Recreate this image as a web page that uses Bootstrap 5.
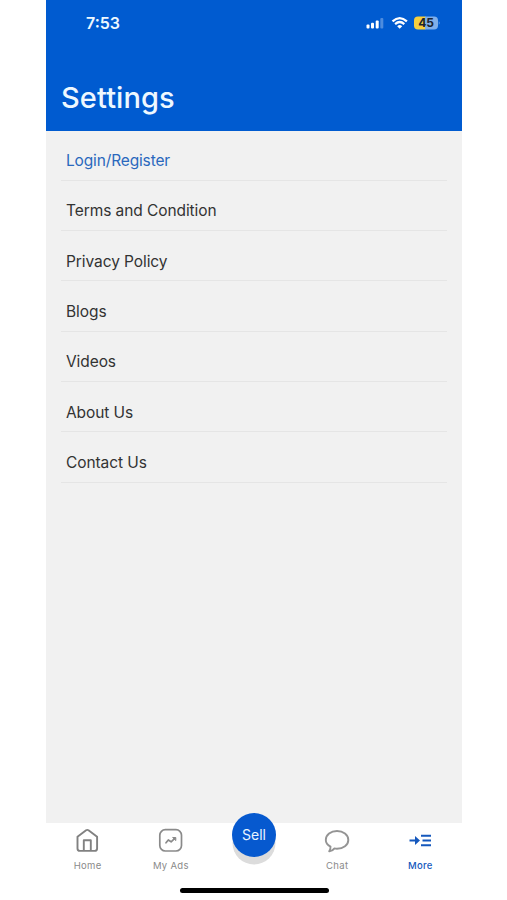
<!DOCTYPE html>
<html lang="en">
<head>
<meta charset="utf-8">
<meta name="viewport" content="width=device-width, initial-scale=1">
<title>Settings</title>
<link href="https://cdn.jsdelivr.net/npm/bootstrap@5.3.0/dist/css/bootstrap.min.css" rel="stylesheet">
<style>
body { font-family: Inter, "Liberation Sans", sans-serif; background: #fff; }
.phone { width: 416px; height: 900px; margin-left: 46px; overflow: hidden; }
.top-bar { background: #005bd0; height: 130.5px; color: #eef8ff; flex: none; }
.status { height: 46px; padding: 0 22px 0 40px; }
.clock { font-size: 16px; font-weight: 600; line-height: 46px; letter-spacing: 0; }
.page-title { font-size: 29px; font-weight: 500; line-height: 36px; margin: 34px 0 0 15px; letter-spacing: .1px; }
.panel { background: #f1f1f1; padding: 0 15px; }
.menu-row { height: 50.3px; padding: 20.7px 5px 0; border-bottom: 1.5px solid #e5e5e5; font-size: 15.5px; line-height: 20px; letter-spacing: -.08px; color: #333; }
.menu-row.accent { color: #2a68bd; padding-top: 20px; letter-spacing: -.15px; }
.tab-bar { height: 77.5px; flex: none; }
.tab { flex: 1 1 0; color: #8a8a8a; font-size: 9.5px; line-height: 12px; padding-top: 5px; letter-spacing: .3px; }
.tab svg { display: block; margin-bottom: 7px; }
.tab.current { color: #1558bd; font-weight: 500; }
.tab-mid { flex: 1 1 0; }
.sell { width: 44px; height: 44px; margin-top: -9.5px; padding-bottom: 2px; background: #0659cf; color: #e8f4ff; font-size: 14px; box-shadow: 0 8px 0 -.5px #dcdcdc; }
.home-pill { width: 149px; height: 5px; background: #000; margin: 0 auto 7px; }
</style>
<script src="https://cdn.jsdelivr.net/npm/bootstrap@5.3.0/dist/js/bootstrap.bundle.min.js"></script>
</head>
<body>
<div class="phone d-flex flex-column">
  <header class="top-bar">
    <div class="status d-flex justify-content-between align-items-center">
      <span class="clock">7:53</span>
      <svg width="75" height="16" viewBox="0 0 75 16" aria-hidden="true">
        <g fill="#fff">
          <rect x="1.500" y="9.500" width="3" height="4" rx="1"/>
          <rect x="6" y="7.800" width="3" height="5.700" rx="1"/>
          <rect x="10.700" y="5.500" width="3" height="8" rx="1"/>
          <rect x="15.300" y="3" width="3" height="10.500" rx="1" opacity=".3"/>
        </g>
        <g fill="none" stroke="#fff" stroke-width="2.200">
          <path d="M27.500 6.400Q34.700 -.3 41.900 6.400"/>
          <path d="M30.100 9.100Q34.700 4.900 39.300 9.100"/>
        </g>
        <path d="M32.200 11.200Q34.700 9 37.200 11.200L34.700 13.700Z" fill="#fff"/>
        <path d="M53 1.500H60.500V14.500H53Q49 14.500 49 10.500V5.500Q49 1.500 53 1.500Z" fill="#f7cf3c"/>
        <path d="M60 1.500H69Q73 1.500 73 5.500V10.500Q73 14.500 69 14.500H60Z" fill="#7fafea"/>
        <path d="M73.800 6.300Q75.300 8 73.800 9.700Z" fill="#7fafea"/>
        <text x="61" y="12.200" text-anchor="middle" font-size="12" font-weight="700" letter-spacing="-.2" fill="#1c2430">45</text>
      </svg>
    </div>
    <h1 class="page-title">Settings</h1>
  </header>
  <main class="panel flex-grow-1">
    <nav class="d-flex flex-column">
      <a class="menu-row accent text-decoration-none" href="#">Login/Register</a>
      <a class="menu-row text-decoration-none" href="#">Terms and Condition</a>
      <a class="menu-row text-decoration-none" href="#">Privacy Policy</a>
      <a class="menu-row text-decoration-none" href="#">Blogs</a>
      <a class="menu-row text-decoration-none" href="#">Videos</a>
      <a class="menu-row text-decoration-none" href="#">About Us</a>
      <a class="menu-row text-decoration-none" href="#">Contact Us</a>
    </nav>
  </main>
  <footer class="tab-bar d-flex flex-column justify-content-between bg-white">
    <nav class="d-flex">
      <a class="tab d-flex flex-column align-items-center text-decoration-none" href="#">
        <svg width="26" height="25" viewBox="0.700 0 26 25" fill="none" stroke="#818181" stroke-width="1.900" stroke-linejoin="round"><path d="M3.200 8.800L11.800 2.300Q13 1.500 14.200 2.300L22.800 8.800V20.500Q22.800 22.900 20.400 22.900H5.600Q3.200 22.900 3.200 20.500Z"/><path d="M9.500 22.700V12.300H16.500V22.700"/></svg>
        <span>Home</span>
      </a>
      <a class="tab d-flex flex-column align-items-center text-decoration-none" href="#">
        <svg width="26" height="25" viewBox="0.500 0 26 25" fill="none" stroke="#8a8a8a" stroke-width="1.700" stroke-linejoin="round" stroke-linecap="round"><rect x="2.300" y="1.700" width="21.700" height="21.300" rx="5.500"/><path d="M8.500 14.800L10.800 12L13.600 13.800L17 10.700"/><path d="M15.500 9.500H18.300V12.200Z" fill="#8a8a8a" stroke-width="1"/></svg>
        <span>My Ads</span>
      </a>
      <div class="tab-mid d-flex justify-content-center">
        <a class="sell rounded-circle d-flex align-items-center justify-content-center text-decoration-none" href="#">Sell</a>
      </div>
      <a class="tab d-flex flex-column align-items-center text-decoration-none" href="#">
        <svg width="26" height="25" viewBox="0 0 26 25" fill="none" stroke="#949494" stroke-width="1.900" stroke-linejoin="round"><path d="M6.500 18.600C3.500 17 1.800 14.700 1.800 12C1.800 6.900 6.800 3 13 3S24.300 6.900 24.300 12S19.300 20.700 13 20.700Q11.700 20.700 10.500 20.400Q8.200 23.400 5.200 23.200Q6.700 21.200 6.500 18.600Z"/></svg>
        <span>Chat</span>
      </a>
      <a class="tab current d-flex flex-column align-items-center text-decoration-none" href="#">
        <svg width="26" height="25" viewBox="0 0 26 25" fill="none" stroke="#1558bd" stroke-width="2"><path d="M2.500 12.500H9"/><path d="M8 8L13 12.500L8 17Z" fill="#1558bd" stroke="none"/><path d="M14 7.800H24M15.500 12.500H24M14 17.200H24"/></svg>
        <span>More</span>
      </a>
    </nav>
    <div class="home-pill rounded-pill"></div>
  </footer>
</div>
</body>
</html>
